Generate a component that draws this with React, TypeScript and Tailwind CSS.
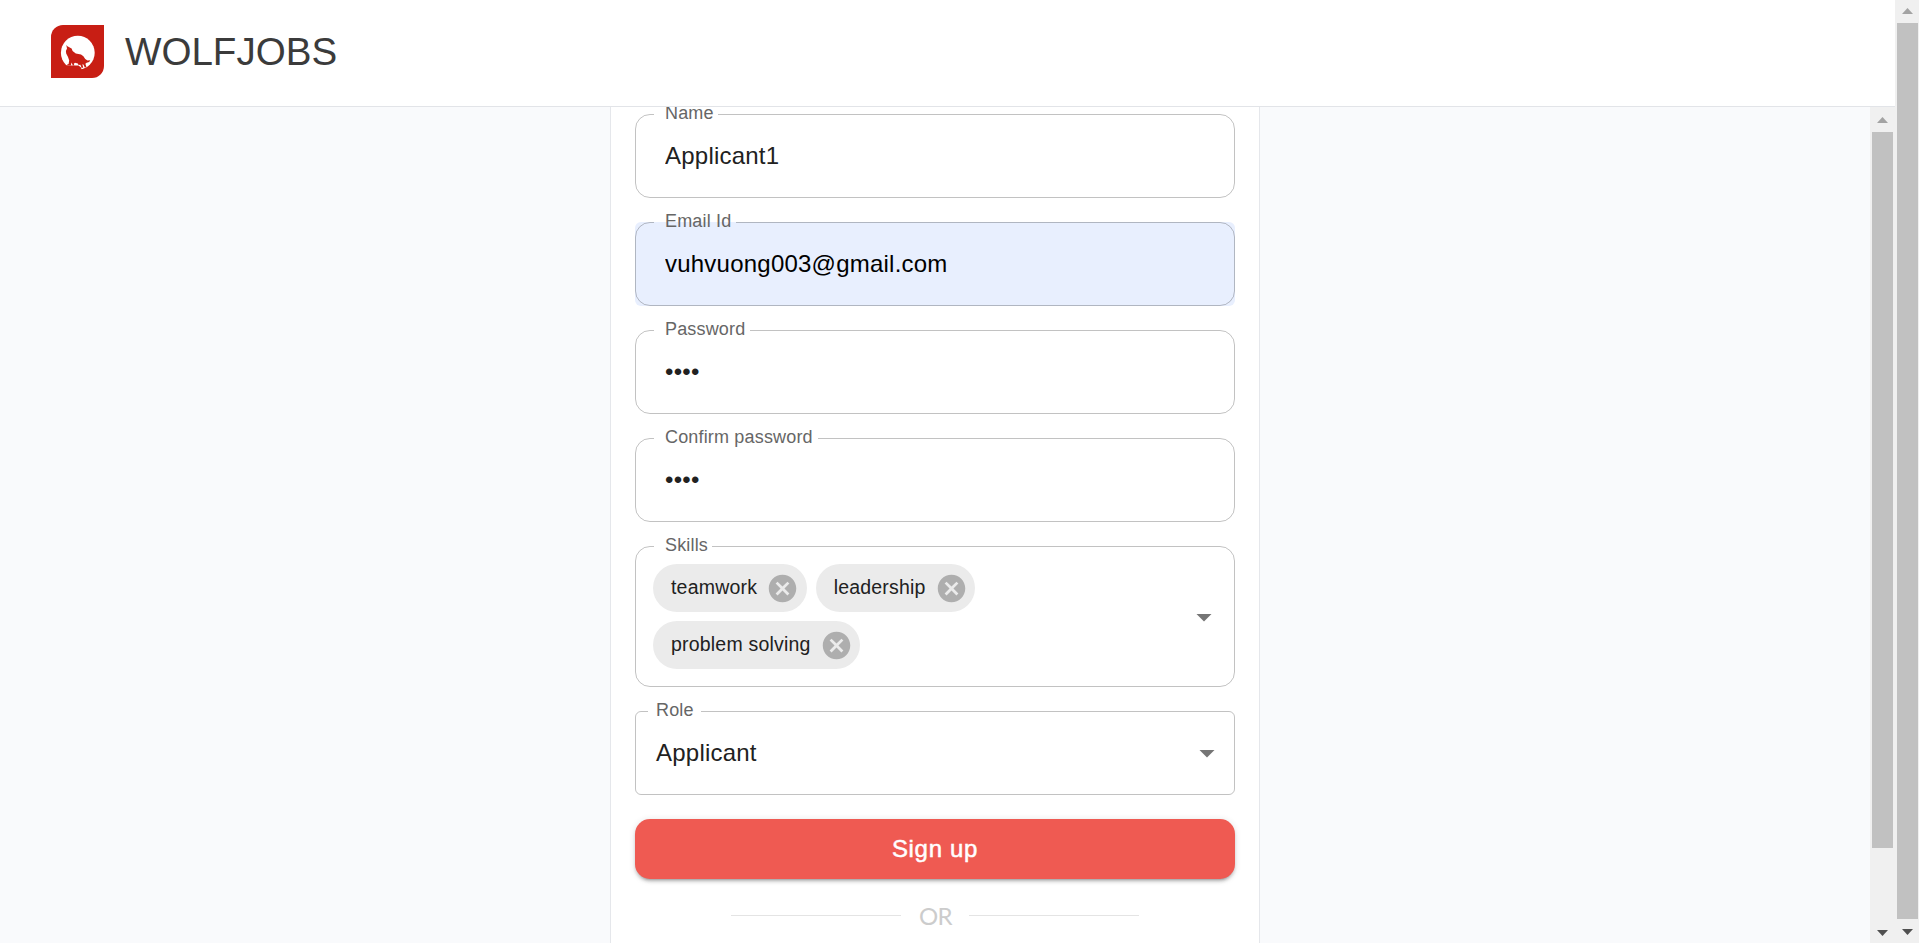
import React from "react";

type FieldProps = {
  label: string;
  notch: string;
  children: React.ReactNode;
  box?: string;
  labelPad?: string;
};

function Field({ label, notch, children, box = "h-[84px] rounded-[15px]", labelPad = "pl-[11px]" }: FieldProps) {
  return (
    <div className={`relative w-full shrink-0 border border-black/24 ${box}`}>
      {children}
      <div className={`absolute -top-px h-px whitespace-nowrap ${notch}`}>
        <span
          className={`absolute left-0 -top-[14px] text-[18px] leading-[26px] tracking-[0.17px] text-[#666666] ${labelPad}`}
        >
          {label}
        </span>
      </div>
    </div>
  );
}

function TextInput({ value, type = "text", color = "text-[#212121]" }: { value: string; type?: string; color?: string }) {
  return (
    <input
      type={type}
      defaultValue={value}
      className={`block h-full w-full bg-transparent px-[29px] text-[24px] tracking-[0.225px] outline-none ${color}`}
    />
  );
}

function Chip({ text }: { text: string }) {
  return (
    <div className="flex h-12 items-center rounded-full bg-[#ebebeb] pl-[18px] pr-[7.5px]">
      <span className="text-[19.5px] tracking-[0.2px] text-[#212121]">{text}</span>
      <svg viewBox="0 0 24 24" className="ml-[9px] size-[33px] fill-[#aeaeae]">
        <path d="M12 2C6.47 2 2 6.47 2 12s4.47 10 10 10 10-4.47 10-10S17.53 2 12 2zm5 13.59L15.59 17 12 13.41 8.41 17 7 15.59 10.59 12 7 8.41 8.41 7 12 10.59 15.59 7 17 8.41 13.41 12 17 15.59z" />
      </svg>
    </div>
  );
}

function DropArrow() {
  return (
    <svg viewBox="0 0 24 24" className="size-9 shrink-0 fill-[#757575]">
      <path d="M7 10l5 5 5-5z" />
    </svg>
  );
}

function ScrollArrow({ down = false }: { down?: boolean }) {
  return (
    <svg viewBox="0 0 11 6" className={down ? "h-[6px] w-[11px] fill-[#505050]" : "h-[6px] w-[11px] fill-[#a3a3a3]"}>
      {down ? <path d="M0 0h11L5.5 6z" /> : <path d="M0 6h11L5.5 0z" />}
    </svg>
  );
}

function Logo() {
  return (
    <svg viewBox="0 0 53 53" className="size-[53px]">
      <path d="M12 0h41v41a12 12 0 0 1-12 12H0V12A12 12 0 0 1 12 0z" fill="#c81e14" />
      <circle cx="26.8" cy="27.7" r="16.9" fill="#fff" />
      <path
        d="M15.3 20L16.4 21.2 20.6 23.6 21.6 26 24.8 28.6 30 29.5 32.4 31.2 34.2 34 36.5 35.4 39.2 35.2 38.2 37 35.6 37.8 34.4 38.8 35.4 42 33.8 42.4 32.4 39.4 31.4 39.2 32.2 42.8 30.6 42.8 29.4 39.8 27.6 40 26.8 38.4 24 37.8 22.8 38.8 23.4 40.6 21.8 40.6 20.6 37.6 19.8 40.6 16 40.6 16 39.8 17.6 39 18.2 35.6 17 32 15.2 28.6 14.9 26 16 23.4z"
        fill="#c81e14"
      />
      <path d="M12 40.4h15.5l2.5 2.2 1 3.4H12z" fill="#c81e14" />
    </svg>
  );
}

export default function App() {
  return (
    <div className="flex h-[943px] w-full overflow-hidden bg-[#f9fafc] font-['Liberation_Sans',Arial,sans-serif]">
      <div className="flex min-w-0 flex-1 flex-col">
        <header className="flex h-[107px] shrink-0 items-center gap-[21px] border-b border-[#e2e4e8] bg-white pl-[51px] pb-[3px]">
          <Logo />
          <span className="pt-px text-[38.6px] leading-[48px] text-[#3b3b3b]">WOLFJOBS</span>
        </header>
        <div className="flex min-h-0 flex-1">
          <main className="flex min-w-0 flex-1 justify-center overflow-hidden">
            <form className="flex w-[650px] flex-col gap-6 border-x border-[#e5e7eb] bg-white px-6 pt-[7px]">
              <Field label="Name" notch="left-[18px] w-[64px] bg-white">
                <TextInput value="Applicant1" />
              </Field>
              <div className="rounded-[6px] bg-[#e8effe]">
                <Field label="Email Id" notch="left-[18px] w-[82px] bg-[#e8effe]">
                  <TextInput value="vuhvuong003@gmail.com" color="text-black" />
                </Field>
              </div>
              <Field label="Password" notch="left-[18px] w-[96px] bg-white">
                <TextInput value="1234" type="password" />
              </Field>
              <Field label="Confirm password" notch="left-[18px] w-[164px] bg-white">
                <TextInput value="1234" type="password" />
              </Field>
              <Field label="Skills" notch="left-[18px] w-[58px] bg-white" box="h-[141px] rounded-[15px]">
                <div className="flex h-full items-center justify-between pl-[17px] pr-[12px]">
                  <div className="flex w-[420px] flex-wrap gap-[9px]">
                    <Chip text="teamwork" />
                    <Chip text="leadership" />
                    <Chip text="problem solving" />
                  </div>
                  <DropArrow />
                </div>
              </Field>
              <Field
                label="Role"
                notch="left-[12px] w-[53px] bg-white"
                box="h-[84px] rounded-[6px]"
                labelPad="pl-[8px]"
              >
                <div className="flex h-full items-center justify-between pl-[20px] pr-[9px]">
                  <span className="text-[24px] tracking-[0.225px] text-[#212121]">Applicant</span>
                  <DropArrow />
                </div>
              </Field>
              <button
                type="button"
                className="h-[60px] shrink-0 rounded-[15px] bg-[#ef5a52] text-[24px] tracking-[0.68px] text-white shadow-[0_4px_2px_-3px_rgba(0,0,0,0.2),0_3px_3px_0_rgba(0,0,0,0.14),0_1px_7px_0_rgba(0,0,0,0.12)] [-webkit-text-stroke:0.5px_white]"
              >
                Sign up
              </button>
              <div className="flex h-[25px] shrink-0 items-center justify-center gap-[18px]">
                <div className="h-px w-[170px] bg-[#e4e4e4]" />
                <span className="w-8 pt-px text-center font-[Lato] text-[24px] leading-6 tracking-[-0.8px] text-[#cccccc]">OR</span>
                <div className="h-px w-[170px] bg-[#e4e4e4]" />
              </div>
            </form>
          </main>
          <div className="flex w-[25px] flex-col items-center bg-[#f0f0f0] pt-[10px] pb-[7px]">
            <ScrollArrow />
            <div className="mt-[9px] h-[716px] w-[21px] bg-[#c1c1c1]" />
            <div className="flex-1" />
            <ScrollArrow down />
          </div>
        </div>
      </div>
      <div className="flex w-6 flex-col items-center bg-[#f0f0f0] pt-[8px] pb-[8px]">
        <ScrollArrow />
        <div className="mt-[9px] h-[896px] w-[21px] bg-[#c1c1c1]" />
        <div className="flex-1" />
        <ScrollArrow down />
      </div>
    </div>
  );
}
